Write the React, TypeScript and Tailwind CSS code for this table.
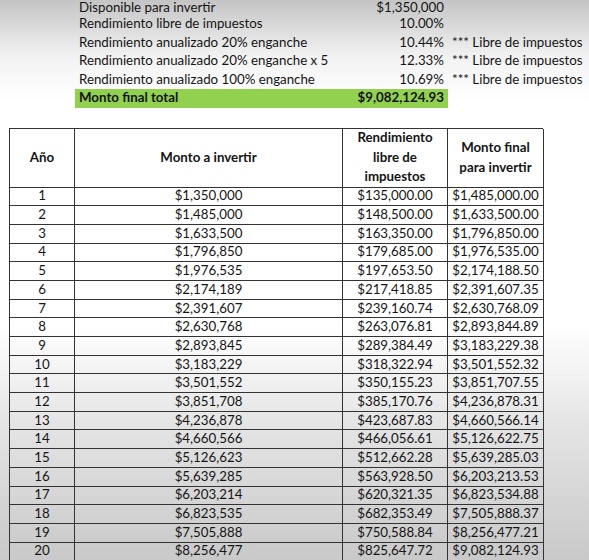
import React from 'react';

const summary = [
    { label: 'Disponible para invertir', value: '$1,350,000', note: '' },
    { label: 'Rendimiento libre de impuestos', value: '10.00%', note: '' },
    { label: 'Rendimiento anualizado 20% enganche', value: '10.44%', note: '*** Libre de impuestos' },
    { label: 'Rendimiento anualizado 20% enganche x 5', value: '12.33%', note: '*** Libre de impuestos' },
    { label: 'Rendimiento anualizado 100% enganche', value: '10.69%', note: '*** Libre de impuestos' },
];

const rows = [
    ['1', '$1,350,000', '$135,000.00', '$1,485,000.00'],
    ['2', '$1,485,000', '$148,500.00', '$1,633,500.00'],
    ['3', '$1,633,500', '$163,350.00', '$1,796,850.00'],
    ['4', '$1,796,850', '$179,685.00', '$1,976,535.00'],
    ['5', '$1,976,535', '$197,653.50', '$2,174,188.50'],
    ['6', '$2,174,189', '$217,418.85', '$2,391,607.35'],
    ['7', '$2,391,607', '$239,160.74', '$2,630,768.09'],
    ['8', '$2,630,768', '$263,076.81', '$2,893,844.89'],
    ['9', '$2,893,845', '$289,384.49', '$3,183,229.38'],
    ['10', '$3,183,229', '$318,322.94', '$3,501,552.32'],
    ['11', '$3,501,552', '$350,155.23', '$3,851,707.55'],
    ['12', '$3,851,708', '$385,170.76', '$4,236,878.31'],
    ['13', '$4,236,878', '$423,687.83', '$4,660,566.14'],
    ['14', '$4,660,566', '$466,056.61', '$5,126,622.75'],
    ['15', '$5,126,623', '$512,662.28', '$5,639,285.03'],
    ['16', '$5,639,285', '$563,928.50', '$6,203,213.53'],
    ['17', '$6,203,214', '$620,321.35', '$6,823,534.88'],
    ['18', '$6,823,535', '$682,353.49', '$7,505,888.37'],
    ['19', '$7,505,888', '$750,588.84', '$8,256,477.21'],
    ['20', '$8,256,477', '$825,647.72', '$9,082,124.93'],
];

export default function App() {
    return (
        <main className="h-[560px] w-[589px] overflow-hidden bg-[linear-gradient(to_bottom,#c4c4c4_0%,#f2f2f2_10%,#ffffff_18%,#ffffff_58%,#e4e4e4_76%,#c9c9c9_100%)] font-['Lato',sans-serif] text-[13.3px] text-[#141414]">
            {/* resumen */}
            <div className="ml-[75px]">
                {summary.map((s, i) => (
                    <div key={s.label} className={i === 0 ? 'flex h-[15px] items-end leading-[15px]' : 'flex h-[18.5px] items-center'}>
                        <div className="flex w-[373px] justify-between px-1">
                            <span>{s.label}</span>
                            <span>{s.value}</span>
                        </div>
                        <span className="ml-1">{s.note}</span>
                    </div>
                ))}
                <div className="flex h-[18.5px] w-[373px] items-center justify-between bg-[#92d050] px-1 font-bold">
                    <span>Monto final total</span>
                    <span>$9,082,124.93</span>
                </div>
            </div>

            {/* tabla */}
            <div className="ml-[9px] mt-[20px] grid w-[534px] grid-cols-[65px_268px_105px_96px] border-l border-t border-[#333]">
                <div className="flex h-[59px] items-center justify-center border-b border-r border-[#333] font-bold">Año</div>
                <div className="flex h-[59px] items-center justify-center border-b border-r border-[#333] font-bold">Monto a invertir</div>
                <div className="flex h-[59px] items-center justify-center border-b border-r border-[#333] text-center font-bold leading-[19.5px]">
                    Rendimiento<br />libre de<br />impuestos
                </div>
                <div className="flex h-[59px] items-center justify-center border-b border-r border-[#333] text-center font-bold leading-[19.5px]">
                    Monto final<br />para invertir
                </div>
                {rows.map((r) =>
                    r.map((c, i) => (
                        <div key={r[0] + '-' + i} className="flex h-[18.7px] items-center justify-center border-b border-r border-[#333]">
                            {c}
                        </div>
                    ))
                )}
            </div>
        </main>
    );
}
